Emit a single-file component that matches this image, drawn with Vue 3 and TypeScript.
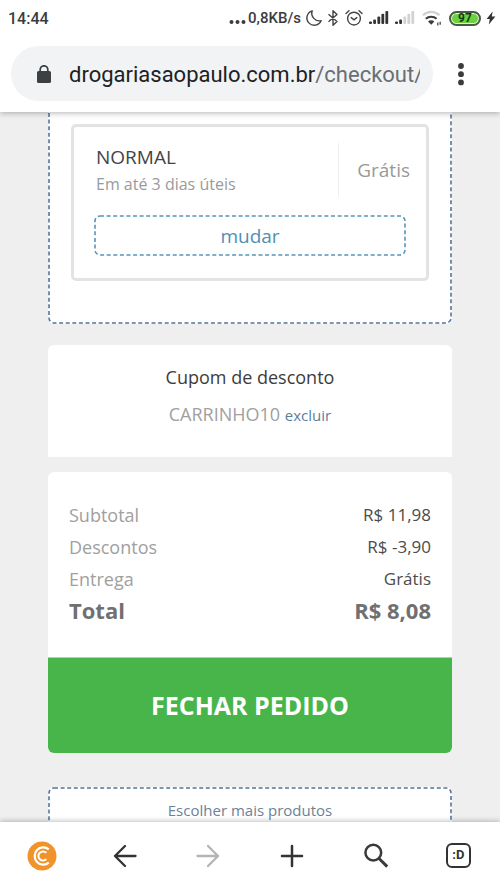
<script setup lang="ts">
interface SummaryLine {
  label: string
  value: string
}

const summary: SummaryLine[] = [
  { label: 'Subtotal', value: 'R$ 11,98' },
  { label: 'Descontos', value: 'R$ -3,90' },
  { label: 'Entrega', value: 'Grátis' },
]
</script>

<template>
  <div class="screen">
    <header class="top">
      <div class="status">
        <span>14:44</span>
        <div class="status-right">
          <svg class="dots" width="17" height="18" viewBox="0 0 17 18" fill="#3c3c3c">
            <circle cx="2.5" cy="13" r="2" /><circle cx="8.5" cy="13" r="2" /><circle cx="14.5" cy="13" r="2" />
          </svg>
          <span class="speed">0,8KB/s</span>
          <svg width="18" height="18" viewBox="0 0 18 18" fill="none" stroke="#444" stroke-width="1.4" stroke-linejoin="round">
            <path d="M7.2 1.8a7.4 7.4 0 1 0 9 9.8A7.6 7.6 0 0 1 7.2 1.8z" />
          </svg>
          <svg class="bluetooth" width="12" height="18" viewBox="0 0 12 18" fill="none" stroke="#444" stroke-width="1.4" stroke-linejoin="round">
            <path d="M1.5 5.2l8.5 7.3-4 3.8V1.7l4 3.8-8.5 7.3" />
          </svg>
          <svg width="18" height="18" viewBox="0 0 18 18" fill="none" stroke="#444" stroke-width="1.4" stroke-linecap="round">
            <circle cx="9" cy="9.6" r="6.4" /><path d="M6.2 8.6L9 10.8l2.8-2.2M1 4.6l3-2.8M17 4.6l-3-2.8" />
          </svg>
          <svg class="signal" width="20" height="18" viewBox="0 0 20 18" fill="#333">
            <rect x="0" y="12.5" width="3" height="2.5" rx="1" /><rect x="4.2" y="10.5" width="2.8" height="4.5" rx="1" />
            <rect x="8.4" y="7.5" width="2.8" height="7.5" rx="1" /><rect x="12.4" y="4.8" width="2.8" height="10.2" rx="1" />
            <rect x="16.4" y="2" width="2.8" height="13" rx="1" />
          </svg>
          <svg class="signal" width="20" height="18" viewBox="0 0 20 18" fill="#d2d2d2">
            <rect x="0" y="12.5" width="3" height="2.5" rx="1" fill="#333" /><rect x="4.2" y="10.5" width="2.8" height="4.5" rx="1" fill="#333" />
            <rect x="8.4" y="7.5" width="2.8" height="7.5" rx="1" /><rect x="12.4" y="4.8" width="2.8" height="10.2" rx="1" />
            <rect x="16.4" y="2" width="2.8" height="13" rx="1" />
          </svg>
          <svg class="wifi" width="20" height="18" viewBox="0 0 20 18" fill="none">
            <path d="M1 6.2a12 12 0 0 1 16.4 0" stroke="#d0d0d0" stroke-width="2.2" />
            <path d="M3.8 9.8a7.8 7.8 0 0 1 10.8 0" stroke="#3c3c3c" stroke-width="2" />
            <path d="M6 12.6a4.6 4.6 0 0 1 6.4 0l-3.2 3.2z" fill="#3c3c3c" />
            <path d="M15.8 13.4v3M18.2 12.8v3" stroke="#555" stroke-width="1.4" />
          </svg>
          <span class="battery">97</span>
          <svg class="bolt" width="10" height="18" viewBox="0 0 10 18" fill="#333">
            <path d="M6.6 2.5L.6 10h3.2L2.8 15.4 9.4 7.6H5.8z" />
          </svg>
        </div>
      </div>
      <div class="toolbar">
        <button class="address" type="button" aria-label="drogariasaopaulo.com.br/checkout">
          <svg width="16" height="20" viewBox="0 0 16 20">
            <rect x="1" y="6" width="14" height="12" rx="1.6" fill="#3c4043" />
            <path d="M4.2 7V4.6a3.8 3.8 0 0 1 7.6 0V7" fill="none" stroke="#3c4043" stroke-width="1.7" />
          </svg>
          <span class="url">drogariasaopaulo.com.br<span class="path">/checkout/</span></span>
        </button>
        <button class="more" type="button" aria-label="Menu">
          <svg width="8" height="24" viewBox="0 0 8 24" fill="#3c3c3c">
            <circle cx="4" cy="4" r="2.9" /><circle cx="4" cy="12.2" r="2.9" /><circle cx="4" cy="20.4" r="2.9" />
          </svg>
        </button>
      </div>
    </header>

    <main class="content">
      <section class="delivery">
        <svg class="dashes open-top" aria-hidden="true"><rect rx="5" /></svg>
        <div class="option">
          <div class="option-info">
            <div class="option-text">
              <h2>NORMAL</h2>
              <p>Em até 3 dias úteis</p>
            </div>
            <span class="price">Grátis</span>
          </div>
          <button class="change" type="button">
            <svg class="dashes" aria-hidden="true"><rect rx="5" /></svg>
            mudar
          </button>
        </div>
      </section>

      <section class="coupon">
        <h2>Cupom de desconto</h2>
        <p>CARRINHO10 <a href="#excluir">excluir</a></p>
      </section>

      <section class="summary">
        <dl>
          <div v-for="line in summary" :key="line.label" class="line">
            <dt>{{ line.label }}</dt>
            <dd>{{ line.value }}</dd>
          </div>
          <div class="line total">
            <dt>Total</dt>
            <dd>R$ 8,08</dd>
          </div>
        </dl>
        <button class="submit" type="button">FECHAR PEDIDO</button>
      </section>

      <a class="more-products" href="#produtos">
        <svg class="dashes" aria-hidden="true"><rect rx="5" /></svg>
        Escolher mais produtos
      </a>
    </main>

    <nav class="bottom">
      <button type="button" aria-label="CryptoTab">
        <svg width="32" height="32" viewBox="0 0 32 32" fill="none" stroke="#fff">
          <circle cx="16" cy="16" r="14.5" fill="#f0932b" stroke="none" />
          <path d="M22.8 9.4A8.6 8.6 0 1 0 22.8 22.6" stroke-width="2.2" />
          <path d="M20.4 12.9A4.6 4.6 0 1 0 20.4 19.1" stroke-width="2" />
        </svg>
      </button>
      <button type="button" aria-label="Voltar">
        <svg width="32" height="32" viewBox="0 0 32 32" fill="none" stroke="#333" stroke-width="2.3" stroke-linecap="round" stroke-linejoin="round">
          <path d="M26.5 16H6M16 6L6 16l10 10" />
        </svg>
      </button>
      <button type="button" aria-label="Avançar">
        <svg width="32" height="32" viewBox="0 0 32 32" fill="none" stroke="#b4b4b4" stroke-width="2.3" stroke-linecap="round" stroke-linejoin="round">
          <path d="M5.5 16H26M16 6l10 10-10 10" />
        </svg>
      </button>
      <button type="button" aria-label="Nova guia">
        <svg width="32" height="32" viewBox="0 0 32 32" fill="none" stroke="#333" stroke-width="2.5" stroke-linecap="round">
          <path d="M16 6v20M6 16h20" />
        </svg>
      </button>
      <button type="button" aria-label="Buscar">
        <svg width="32" height="32" viewBox="0 0 32 32" fill="none" stroke="#3a3a3a" stroke-width="2.5">
          <circle cx="14.3" cy="12.6" r="7.9" /><path d="M19.8 18.2l8.4 8.4" stroke-width="3" />
        </svg>
      </button>
      <button type="button" aria-label="Guias abertas">
        <span class="tabs">:D</span>
      </button>
    </nav>
  </div>
</template>

<style>
body {
  margin: 0;
}
</style>

<style scoped>
.screen {
  display: grid;
  grid-template-columns: minmax(0, 1fr);
  grid-template-rows: auto minmax(0, 1fr) auto;
  height: 100vh;
  overflow: hidden;
  background: #efefef;
  font-family: "Open Sans", "Noto Sans", sans-serif;
  color: #444;
}

h2,
p,
dl,
dt,
dd {
  margin: 0;
  font-weight: 400;
}

button {
  border: 0;
  padding: 0;
  background: none;
  font: inherit;
  color: inherit;
}

svg {
  display: block;
  flex: none;
}

.top {
  position: relative;
  z-index: 1;
  background: #fff;
  box-shadow: 0 1px 6px rgba(0, 0, 0, 0.3);
  font-family: Roboto, sans-serif;
}

.status {
  display: flex;
  justify-content: space-between;
  align-items: center;
  height: 36px;
  padding: 0 4px 0 8px;
  font-size: 16px;
  font-weight: 500;
  color: #3c3c3c;
}

.status-right {
  display: flex;
  align-items: center;
}

.speed {
  margin: 0 4px 0 2px;
  font-size: 15px;
}

.bluetooth {
  margin: 0 6px 0 4px;
}

.signal {
  margin-left: 6px;
}

.wifi {
  margin: 0 7px;
}

.battery {
  box-sizing: border-box;
  width: 32px;
  height: 15px;
  border: 2px solid #4b5a48;
  border-radius: 8px;
  background: #6cd13f;
  box-shadow: inset 0 0 0 1px #e4f7dc;
  font-size: 12px;
  font-weight: 700;
  line-height: 11px;
  text-align: center;
  color: #173a10;
}

.bolt {
  margin-left: 5px;
}

.toolbar {
  display: flex;
  align-items: center;
  padding: 10px 31px 11px 11px;
}

.address {
  display: flex;
  flex: 1;
  align-items: center;
  gap: 17px;
  min-width: 0;
  height: 55px;
  padding: 3px 13px 0 25px;
  border-radius: 28px;
  background: #f1f3f4;
}

.url {
  flex: 1;
  min-width: 0;
  overflow: hidden;
  white-space: nowrap;
  text-align: left;
  font-size: 22px;
  line-height: 32px;
  color: #202124;
}

.path {
  color: #6a6e72;
}

.more {
  display: flex;
  justify-content: center;
  width: 16px;
  margin-left: 20px;
}

.content {
  display: flex;
  flex-direction: column;
  padding: 0 48px;
  overflow: hidden;
}

.content > * {
  flex: none;
}

.dashes {
  position: absolute;
  inset: 0;
  width: 100%;
  height: 100%;
  overflow: hidden;
  fill: none;
  stroke: #55749b;
  stroke-width: 1.6;
  stroke-dasharray: 4 2.6;
}

.dashes rect {
  x: 1px;
  y: 1px;
  width: calc(100% - 2px);
  height: calc(100% - 2px);
}

.open-top rect {
  y: -12px;
  height: calc(100% + 11px);
}

.delivery {
  position: relative;
  padding: 12px 23px 43px;
  border-radius: 0 0 6px 6px;
  background: #fff;
}

.option {
  padding: 16px 20px 22px;
  border: 3px solid #e3e3e3;
  border-radius: 5px;
}

.option-info {
  display: flex;
  align-items: center;
  justify-content: space-between;
  margin-bottom: 18px;
}

.option-text {
  flex: 1;
  height: 54px;
  padding-left: 2px;
  border-right: 1px solid #eee;
}

.option-text h2 {
  font-size: 19px;
  line-height: 28px;
}

.option-text p {
  font-size: 16px;
  line-height: 26px;
  color: #9a9a9a;
}

.price {
  padding-left: 18px;
  margin-right: -4px;
  font-size: 19px;
  color: #999;
}

.change {
  position: relative;
  width: 100%;
  height: 41px;
  font-size: 19px;
  color: #4f8fb4;
}

.change .dashes {
  stroke: #5595b8;
}

.coupon {
  height: 112px;
  margin-top: 21px;
  box-sizing: border-box;
  padding-top: 18px;
  border-radius: 6px 6px 0 0;
  background: #fff;
  text-align: center;
}

.coupon h2 {
  font-size: 18px;
  line-height: 28px;
  color: #3c3c3c;
}

.coupon p {
  margin-top: 9px;
  font-size: 18px;
  line-height: 28px;
  color: #a0a0a0;
}

.coupon a {
  font-size: 15px;
  color: #5a7fa0;
  text-decoration: none;
}

.summary {
  margin-top: 15px;
  border-radius: 6px;
  background: #fff;
  overflow: hidden;
}

.summary dl {
  padding: 27px 21px 32px;
}

.line {
  display: flex;
  justify-content: space-between;
  line-height: 32px;
}

.line dt {
  font-size: 18px;
  color: #a0a0a0;
}

.line dd {
  font-size: 17px;
  color: #4c4c4c;
}

.total {
  line-height: 30px;
}

.total dt,
.total dd {
  font-size: 22px;
  font-weight: 700;
  color: #707070;
}

.submit {
  display: block;
  width: 100%;
  height: 96px;
  padding-bottom: 2px;
  border-top: 1px solid #a4dba4;
  background: #48b54b;
  font-size: 25px;
  font-weight: 700;
  color: #fff;
}

.more-products {
  position: relative;
  margin-top: 34px;
  padding: 9px 0 24px;
  border-radius: 6px;
  background: #fff;
  font-size: 15px;
  line-height: 28px;
  text-align: center;
  text-decoration: none;
  color: #6c8299;
}

.bottom {
  position: relative;
  z-index: 1;
  display: grid;
  grid-template-columns: repeat(6, 1fr);
  height: 67px;
  background: #fff;
  box-shadow: 0 -1px 5px rgba(0, 0, 0, 0.25);
}

.bottom button {
  display: flex;
  align-items: center;
  justify-content: center;
}

.tabs {
  box-sizing: border-box;
  width: 25px;
  height: 25px;
  border: 2px solid #333;
  border-radius: 6px;
  font-family: Roboto, sans-serif;
  font-size: 13px;
  font-weight: 700;
  line-height: 20px;
  text-align: center;
  color: #333;
}
</style>
